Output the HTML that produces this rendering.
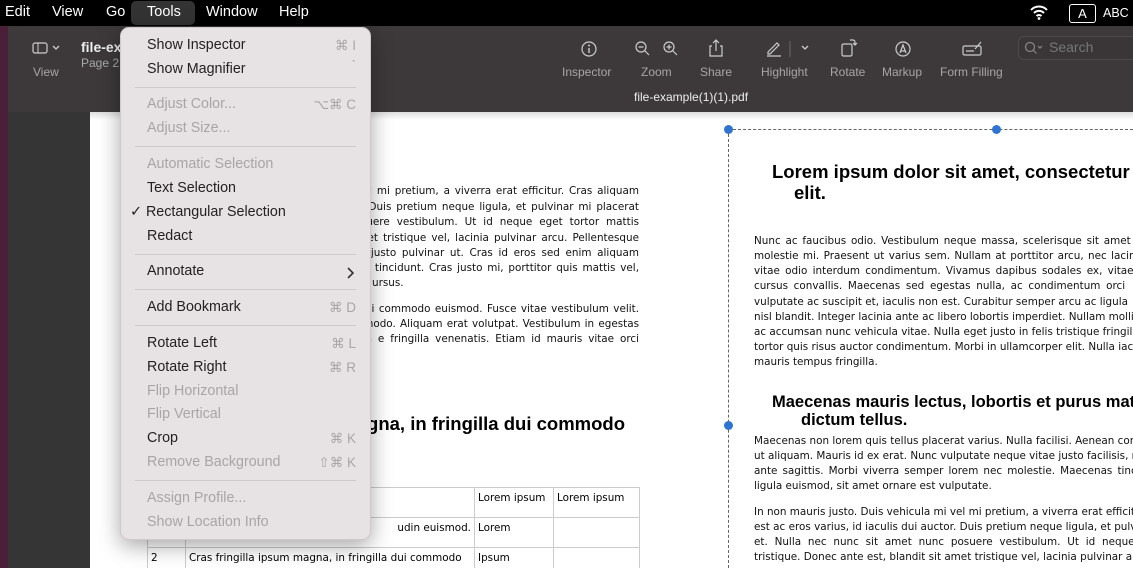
<!DOCTYPE html>
<html><head><meta charset="utf-8"><style>
*{margin:0;padding:0;box-sizing:border-box}
html,body{width:1133px;height:568px;overflow:hidden}
body{position:relative;background:#fff;font-family:"Liberation Sans",sans-serif}
#clip{position:absolute;left:0;top:0;width:1133px;height:568px;overflow:hidden}
.a{position:absolute;white-space:nowrap}
#menubar{left:0;top:0;width:1133px;height:26px;background:#000;color:#fff;font-size:14.5px}
#menubar span{position:absolute;top:4px}
#tb{left:0;top:26px;width:1133px;height:86px;background:#3d393a}
.tl{color:#a9a5a6;font-size:12px;position:absolute;top:39px}
.ic{position:absolute;top:14px}
.p{font-family:"DejaVu Sans",sans-serif;font-size:10.4px;color:#111;position:absolute;white-space:nowrap}
.j{text-align:justify;text-align-last:justify;white-space:normal;overflow:hidden;height:15px}
.h{font-family:"Liberation Sans",sans-serif;font-weight:bold;color:#000;position:absolute;white-space:nowrap}
#menu{left:120px;top:27px;width:251px;height:513px;background:#e7e2e4;border-radius:9px;box-shadow:0 6px 22px rgba(0,0,0,.35);border:1px solid #cfc9cb}
.mi{position:absolute;left:26px;font-size:14.3px;color:#232122}
.dis{color:#a9a5a7}
.sc{position:absolute;right:14px;font-size:13.5px;color:#a9a5a7}
.sep{position:absolute;left:14px;right:14px;height:1px;background:#cdc8ca}
td{border:1px solid #ccc;font-family:"DejaVu Sans",sans-serif;font-size:10.4px;vertical-align:top;padding:4px 3px;height:30px}
</style></head><body><div id="clip">
<div class="a" id="menubar">
<span style="left:5px">Edit</span><span style="left:52px">View</span><span style="left:106px">Go</span>
<div style="position:absolute;left:131px;top:1px;width:64px;height:24px;background:#333;border-radius:5px"></div>
<span style="left:147px">Tools</span><span style="left:206px">Window</span><span style="left:279px">Help</span>
<svg style="position:absolute;left:1030px;top:5px" width="18" height="15" viewBox="0 0 18 15"><path d="M1 5a11 11 0 0 1 16 0M4 8a7 7 0 0 1 10 0M6.5 11a3.5 3.5 0 0 1 5 0" stroke="#fff" stroke-width="2" fill="none"/><circle cx="9" cy="13.5" r="1.4" fill="#fff"/></svg>
<div style="position:absolute;left:1069px;top:4px;width:27px;height:19px;border:1.3px solid #fff;border-radius:3px;font-size:13px;text-align:center;line-height:17px">A</div>
<span style="left:1103px;font-size:12.5px;top:6px">ABC</span>
</div>
<div class="a" id="tb">
<div style="position:absolute;left:0;top:0;width:8px;height:86px;background:#4a2039"></div>
<svg class="ic" style="left:32px;top:16px" width="30" height="12"><rect x="1" y="1" width="14" height="10" rx="2" fill="none" stroke="#ccc" stroke-width="1.2"/><line x1="6" y1="1" x2="6" y2="11" stroke="#ccc"/><path d="M21 4l3 3 3-3" stroke="#ccc" fill="none" stroke-width="1.3"/></svg>
<div class="tl" style="left:33px;top:39px">View</div>
<div style="position:absolute;left:81px;top:13px;color:#eee;font-weight:bold;font-size:14px">file-ex</div>
<div style="position:absolute;left:81px;top:30px;color:#aaa;font-size:12px">Page 2</div>
<svg class="ic" style="left:580px" width="18" height="18"><circle cx="9" cy="9" r="7" fill="none" stroke="#ccc" stroke-width="1.2"/><line x1="9" y1="8" x2="9" y2="13" stroke="#ccc" stroke-width="1.4"/><circle cx="9" cy="5.5" r="1" fill="#ccc"/></svg>
<div class="tl" style="left:562px">Inspector</div>
<svg class="ic" style="left:634px" width="50" height="18"><circle cx="7" cy="7" r="5" fill="none" stroke="#ccc" stroke-width="1.2"/><path d="M4.5 7h5M11 11l4 4" stroke="#ccc" stroke-width="1.2"/><circle cx="35" cy="7" r="5" fill="none" stroke="#ccc" stroke-width="1.2"/><path d="M32.5 7h5M35 4.5v5M39 11l4 4" stroke="#ccc" stroke-width="1.2"/></svg>
<div class="tl" style="left:641px">Zoom</div>
<svg class="ic" style="left:708px;top:12px" width="16" height="20"><path d="M4 8H2v10h12V8h-2M8 13V2M5 5l3-3 3 3" stroke="#ccc" fill="none" stroke-width="1.2"/></svg>
<div class="tl" style="left:700px">Share</div>
<svg class="ic" style="left:765px" width="50" height="18"><path d="M3 12l9-9 2 2-9 9H3zM2 16h14" stroke="#ccc" fill="none" stroke-width="1.2"/><line x1="25" y1="1" x2="25" y2="17" stroke="#666"/><path d="M37 6l3 3 3-3" stroke="#ccc" fill="none" stroke-width="1.3"/></svg>
<div class="tl" style="left:761px">Highlight</div>
<svg class="ic" style="left:840px;top:12px" width="18" height="20"><rect x="2" y="6" width="10" height="12" rx="1.5" fill="none" stroke="#ccc" stroke-width="1.2"/><path d="M10 2h3a2 2 0 0 1 2 2v3M13 5l2 2 2-2" stroke="#ccc" fill="none" stroke-width="1.2"/></svg>
<div class="tl" style="left:830px">Rotate</div>
<svg class="ic" style="left:894px" width="18" height="18"><circle cx="9" cy="9" r="7" fill="none" stroke="#ccc" stroke-width="1.2"/><path d="M6 13l3-8 3 8M7 11h4" stroke="#ccc" fill="none" stroke-width="1.2"/></svg>
<div class="tl" style="left:882px">Markup</div>
<svg class="ic" style="left:961px" width="22" height="18"><rect x="2" y="6" width="18" height="9" rx="1.5" fill="none" stroke="#ccc" stroke-width="1.2"/><path d="M5 11h8M14 9l6-7" stroke="#ccc" fill="none" stroke-width="1.2"/></svg>
<div class="tl" style="left:940px">Form Filling</div>
<div style="position:absolute;left:1018px;top:10px;width:130px;height:24px;border:1px solid #4d494a;border-radius:6px;background:#3a3637;color:#777;font-size:14px;padding:2px 0 0 30px">Search</div>
<svg style="position:absolute;left:1024px;top:15px" width="20" height="14"><circle cx="6" cy="6" r="4.5" fill="none" stroke="#888" stroke-width="1.2"/><path d="M9.5 9.5l3 3M14 5l2 2 2-2" stroke="#888" fill="none" stroke-width="1.2"/></svg>
<div style="position:absolute;left:634px;top:64px;color:#eee;font-size:12px">file-example(1)(1).pdf</div>
</div>
<div class="a" style="left:0;top:112px;width:8px;height:456px;background:#4a2039"></div>
<div class="a" style="left:8px;top:112px;width:82px;height:456px;background:#353535"></div>
<div class="a" style="left:90px;top:112px;width:1043px;height:8px;background:linear-gradient(#ddd,#fff)"></div>

<div class="p j" style="left:150px;top:185px;width:489px">In non mauris justo. Duis vehicula mi vel mi pretium, a viverra erat efficitur. Cras aliquam</div>
<div class="p j" style="left:150px;top:201px;width:489px">est ac eros varius, id iaculis dui auctor. Duis pretium neque ligula, et pulvinar mi placerat</div>
<div class="p j" style="left:150px;top:216px;width:489px">et. Nulla nec nunc sit amet nunc posuere vestibulum. Ut id neque eget tortor mattis</div>
<div class="p j" style="left:150px;top:232px;width:489px">tristique. Donec ante est, blandit sit amet tristique vel, lacinia pulvinar arcu. Pellentesque</div>
<div class="p j" style="left:150px;top:247px;width:489px">scelerisque fermentum erat, id posuere justo pulvinar ut. Cras id eros sed enim aliquam</div>
<div class="p j" style="left:150px;top:262px;width:489px">lobortis. Sed lobortis nisl ut eros efficitur tincidunt. Cras justo mi, porttitor quis mattis vel,</div>
<div class="p" style="left:372px;top:277px">ursus.</div>
<div class="p j" style="left:150px;top:303px;width:489px">Cras fringilla ipsum magna, in fringilla dui commodo euismod. Fusce vitae vestibulum velit. Pellentesque</div>
<div class="p j" style="left:150px;top:318px;width:489px">vehicula lobortis dui, et aliquet nisi commodo. Aliquam erat volutpat. Vestibulum in egestas</div>
<div class="p j" style="left:150px;top:333px;width:489px">quis ante sed tempor. Phasellus et urna e fringilla venenatis. Etiam id mauris vitae orci</div>
<div class="h" style="left:150px;top:413px;font-size:18.5px;width:475px;text-align:right">Cras fringilla ipsum magna, in fringilla dui commodo</div>
<table class="a" style="left:147px;top:487px;width:493px;border-collapse:collapse">
<tr><td style="width:38px"></td><td style="width:289px"></td><td style="width:79px">Lorem ipsum</td><td>Lorem ipsum</td></tr>
<tr><td></td><td style="text-align:right">udin euismod.</td><td>Lorem</td><td></td></tr>
<tr><td>2</td><td>Cras fringilla ipsum magna, in fringilla dui commodo</td><td>Ipsum</td><td></td></tr>
</table>

<div class="a" style="left:728px;top:129px;width:405px;border-top:1px dashed #666"></div>
<div class="a" style="left:728px;top:129px;height:439px;border-left:1px dashed #666"></div>
<div class="a" style="left:724px;top:125px;width:9px;height:9px;border-radius:50%;background:#2f74d0"></div>
<div class="a" style="left:992px;top:125px;width:9px;height:9px;border-radius:50%;background:#2f74d0"></div>
<div class="a" style="left:724px;top:421px;width:9px;height:9px;border-radius:50%;background:#2f74d0"></div>
<div class="h" style="left:772px;top:161px;font-size:18.5px">Lorem ipsum dolor sit amet, consectetur adipiscing</div>
<div class="h" style="left:794px;top:182px;font-size:18.5px">elit.</div>
<div class="p" style="left:754px;top:235px;word-spacing:1.5px">Nunc ac faucibus odio. Vestibulum neque massa, scelerisque sit amet ligula</div>
<div class="p" style="left:754px;top:250px;word-spacing:1.1px">molestie mi. Praesent ut varius sem. Nullam at porttitor arcu, nec lacinia</div>
<div class="p" style="left:754px;top:265px;word-spacing:2px">vitae odio interdum condimentum. Vivamus dapibus sodales ex, vitae</div>
<div class="p" style="left:754px;top:280px;word-spacing:2.4px">cursus convallis. Maecenas sed egestas nulla, ac condimentum orci</div>
<div class="p" style="left:754px;top:296px">vulputate ac suscipit et, iaculis non est. Curabitur semper arcu ac ligula</div>
<div class="p" style="left:754px;top:311px">nisl blandit. Integer lacinia ante ac libero lobortis imperdiet. Nullam mollis</div>
<div class="p" style="left:754px;top:326px">ac accumsan nunc vehicula vitae. Nulla eget justo in felis tristique fringilla</div>
<div class="p" style="left:754px;top:341px">tortor quis risus auctor condimentum. Morbi in ullamcorper elit. Nulla iaculis</div>
<div class="p" style="left:754px;top:356px">mauris tempus fringilla.</div>
<div class="h" style="left:772px;top:393px;font-size:16.5px">Maecenas mauris lectus, lobortis et purus mattis, blandit</div>
<div class="h" style="left:801px;top:411px;font-size:16.5px">dictum tellus.</div>
<div class="p" style="left:754px;top:435px">Maecenas non lorem quis tellus placerat varius. Nulla facilisi. Aenean congue</div>
<div class="p" style="left:754px;top:450px">ut aliquam. Mauris id ex erat. Nunc vulputate neque vitae justo facilisis, non</div>
<div class="p" style="left:754px;top:465px;word-spacing:1.8px">ante sagittis. Morbi viverra semper lorem nec molestie. Maecenas tincidunt</div>
<div class="p" style="left:754px;top:480px">ligula euismod, sit amet ornare est vulputate.</div>
<div class="p" style="left:754px;top:506px">In non mauris justo. Duis vehicula mi vel mi pretium, a viverra erat efficitur.</div>
<div class="p" style="left:754px;top:521px">est ac eros varius, id iaculis dui auctor. Duis pretium neque ligula, et pulvinar</div>
<div class="p" style="left:754px;top:536px;word-spacing:3.5px">et. Nulla nec nunc sit amet nunc posuere vestibulum. Ut id neque eget</div>
<div class="p" style="left:754px;top:551px">tristique. Donec ante est, blandit sit amet tristique vel, lacinia pulvinar arcu.</div>

<div class="a" id="menu">
<div class="mi" style="top:9px">Show Inspector</div><div class="sc" style="top:10px">⌘ I</div>
<div class="mi" style="top:33px">Show Magnifier</div><div class="sc" style="top:30px">`</div>
<div class="sep" style="top:59px"></div>
<div class="mi dis" style="top:68px">Adjust Color...</div><div class="sc" style="top:69px">⌥⌘ C</div>
<div class="mi dis" style="top:92px">Adjust Size...</div>
<div class="sep" style="top:118px"></div>
<div class="mi dis" style="top:128px">Automatic Selection</div>
<div class="mi" style="top:152px">Text Selection</div>
<div class="mi" style="top:176px;left:9px">✓ Rectangular Selection</div>
<div class="mi" style="top:200px">Redact</div>
<div class="sep" style="top:226px"></div>
<div class="mi" style="top:235px">Annotate</div>
<svg style="position:absolute;right:16px;top:239px" width="8" height="12"><path d="M2 1l5 5-5 5" stroke="#333" stroke-width="1.6" fill="none"/></svg>
<div class="sep" style="top:261px"></div>
<div class="mi" style="top:271px">Add Bookmark</div><div class="sc" style="top:272px">⌘ D</div>
<div class="sep" style="top:297px"></div>
<div class="mi" style="top:307px">Rotate Left</div><div class="sc" style="top:308px">⌘ L</div>
<div class="mi" style="top:331px">Rotate Right</div><div class="sc" style="top:332px">⌘ R</div>
<div class="mi dis" style="top:355px">Flip Horizontal</div>
<div class="mi dis" style="top:378px">Flip Vertical</div>
<div class="mi" style="top:402px">Crop</div><div class="sc" style="top:403px">⌘ K</div>
<div class="mi dis" style="top:426px">Remove Background</div><div class="sc" style="top:427px">⇧⌘ K</div>
<div class="sep" style="top:452px"></div>
<div class="mi dis" style="top:462px">Assign Profile...</div>
<div class="mi dis" style="top:486px">Show Location Info</div>
</div>
</div></body></html>
